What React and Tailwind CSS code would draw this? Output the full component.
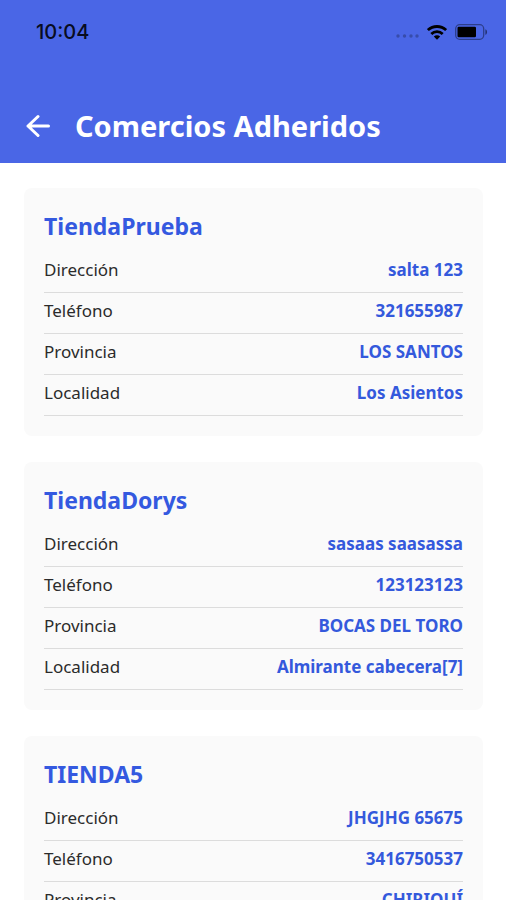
import { useState } from 'react';

const comercios = [
  {
    nombre: 'TiendaPrueba',
    datos: [
      ['Dirección', 'salta 123'],
      ['Teléfono', '321655987'],
      ['Provincia', 'LOS SANTOS'],
      ['Localidad', 'Los Asientos'],
    ],
  },
  {
    nombre: 'TiendaDorys',
    datos: [
      ['Dirección', 'sasaas saasassa'],
      ['Teléfono', '123123123'],
      ['Provincia', 'BOCAS DEL TORO'],
      ['Localidad', 'Almirante cabecera[7]'],
    ],
  },
  {
    nombre: 'TIENDA5',
    datos: [
      ['Dirección', 'JHGJHG 65675'],
      ['Teléfono', '3416750537'],
      ['Provincia', 'CHIRIQUÍ'],
    ],
  },
];

function StatusIcons() {
  return (
    <div className="flex items-center gap-2 text-black">
      <svg className="mt-2" width="23" height="4" viewBox="0 0 23 4" fill="currentColor" opacity="0.25">
        <circle cx="2" cy="2" r="1.7" />
        <circle cx="8.5" cy="2" r="1.7" />
        <circle cx="15" cy="2" r="1.7" />
        <circle cx="21" cy="2" r="1.7" />
      </svg>
      <svg width="20" height="15" viewBox="0 0 20 15" fill="none" stroke="currentColor" strokeWidth="2.8">
        <path d="M0.9 5.1C6 .3 14 .3 19.1 5.1" />
        <path d="M4.3 8.9C7.5 5.9 12.5 5.9 15.7 8.9" />
        <path d="M10 14.8L6.8 11.6C8.6 9.9 11.4 9.9 13.2 11.6Z" fill="currentColor" stroke="none" />
      </svg>
      <svg width="33" height="16" viewBox="0 0 33 16">
        <rect x="0.7" y="0.7" width="28" height="14.6" rx="4" fill="none" stroke="currentColor" strokeOpacity="0.4" strokeWidth="1.3" />
        <rect x="2.5" y="2.8" width="18.5" height="10.4" rx="1.2" fill="currentColor" />
        <path d="M30.4 5.2C32.6 6 32.6 10 30.4 10.8Z" fill="currentColor" fillOpacity="0.5" />
      </svg>
    </div>
  );
}

function ComercioCard({ nombre, datos }) {
  return (
    <article className="bg-[#fafafa] rounded-lg p-5">
      <h2 className="text-[23px] leading-9 font-bold text-[#3459e0] mb-2">{nombre}</h2>
      <dl className="text-[17px] leading-9">
        {datos.map(([etiqueta, valor]) => (
          <div key={etiqueta} className="flex justify-between pb-1 border-b border-[#dcdcdc]">
            <dt className="text-[#2b2b2b]">{etiqueta}</dt>
            <dd className="font-bold text-[#3459dc]">{valor}</dd>
          </div>
        ))}
      </dl>
    </article>
  );
}

export default function App() {
  const [lista] = useState(comercios);

  return (
    <div className="h-screen overflow-hidden flex flex-col bg-white font-['Noto_Sans',sans-serif]">
      <header className="shrink-0 bg-[#4a66e6]">
        {/* Barra de estado */}
        <div className="flex items-center justify-between h-16 pl-9 pr-[18px]">
          <span className="font-['Inter',sans-serif] text-xl font-medium text-[#080c20]">10:04</span>
          <StatusIcons />
        </div>

        {/* Título */}
        <div className="flex items-center gap-6 pl-[26px] pt-6 h-[99px]">
          <button type="button" aria-label="Volver" className="text-white">
            <svg width="25" height="24" viewBox="0 0 25 24" fill="none" stroke="currentColor" strokeWidth="3" strokeLinecap="round" strokeLinejoin="round">
              <path d="M12 2.5L2 12L12 21.5M2 12H22.5" />
            </svg>
          </button>
          <h1 className="text-[29px] font-bold text-white">Comercios Adheridos</h1>
        </div>
      </header>

      <main className="flex-1 min-h-0 overflow-hidden pl-6 pr-[23px] pt-[25px] flex flex-col gap-[26px]">
        {lista.map((c) => (
          <ComercioCard key={c.nombre} nombre={c.nombre} datos={c.datos} />
        ))}
      </main>
    </div>
  );
}
